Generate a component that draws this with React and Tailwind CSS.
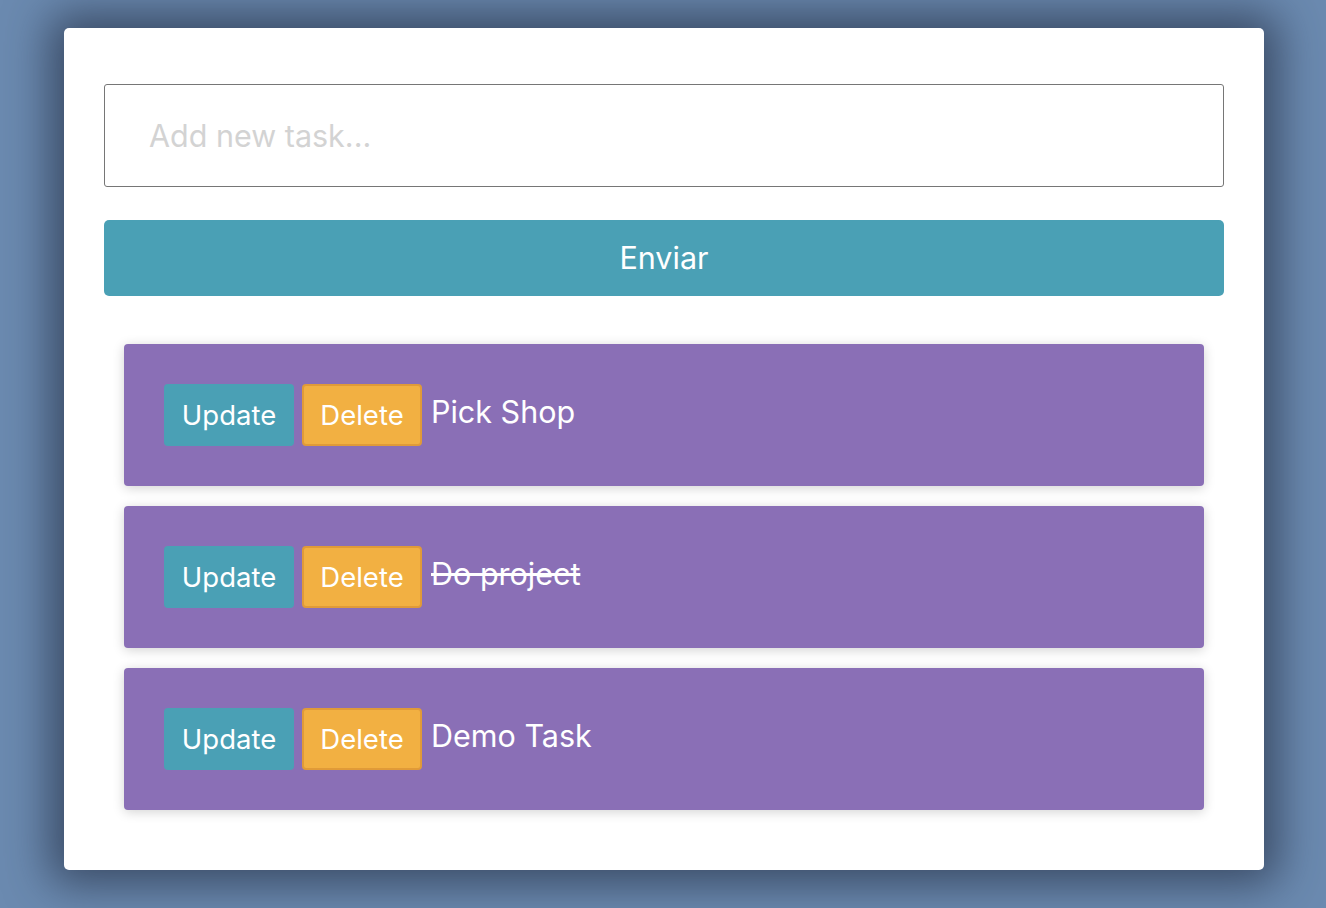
export default function App() {
  const tasks = [
    { text: "Pick Shop", done: false },
    { text: "Do project", done: true },
    { text: "Demo Task", done: false },
  ];
  return (
    <div className="min-h-[908px] w-full bg-[#6b8ab0] pt-[28px] pb-[38px] pl-[64px] font-['Inter','Noto_Sans',sans-serif]">
      <div className="w-[1200px] bg-white rounded-[5px] shadow-[0_0_45px_14px_rgba(30,40,60,0.65)] px-[40px] pt-[56px] pb-[60px]">
        <input
          className="block w-full h-[103px] border border-[#767676] rounded-[3px] px-[44px] text-[30.5px] text-[#333] placeholder:text-[#d3d3d3] outline-none"
          placeholder="Add new task..."
        />
        <button className="mt-[33px] block w-full h-[76px] rounded-[5px] bg-[#4aa0b5] text-white text-[30.5px]">
          Enviar
        </button>
        <div className="mt-[48px] px-[20px] flex flex-col gap-[20px]">
          {tasks.map((t) => (
            <div
              key={t.text}
              className="bg-[#8a6fb6] rounded-[4px] shadow-[0_2px_12px_rgba(0,0,0,0.18)] p-[40px] flex items-center"
            >
              <button className="h-[62px] w-[130px] rounded-[4px] bg-[#4aa0b5] text-white text-[27.5px] pt-[2px]">
                Update
              </button>
              <button className="ml-[8px] h-[62px] w-[120px] rounded-[4px] bg-[#f2b042] border-2 border-[#e09a38] text-white text-[27.5px] pt-[2px]">
                Delete
              </button>
              <span
                className={`ml-[9px] -mt-[6px] text-white text-[30.5px] ${t.done ? "line-through" : ""}`}
              >
                {t.text}
              </span>
            </div>
          ))}
        </div>
      </div>
    </div>
  );
}
